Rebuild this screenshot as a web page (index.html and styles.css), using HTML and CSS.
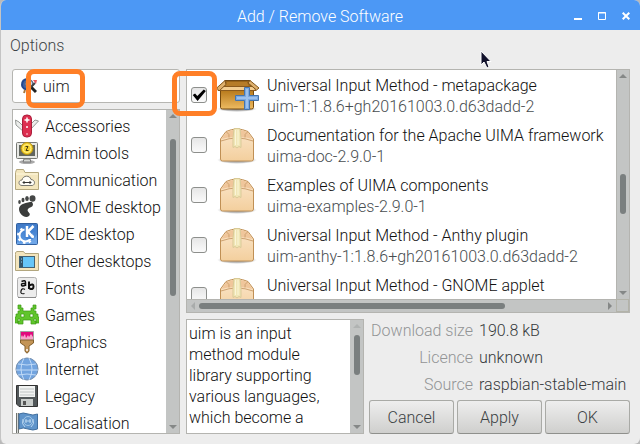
FILE: index.html
```html
<!DOCTYPE html>
<html lang="en">
<head>
<meta charset="utf-8">
<title>Add / Remove Software</title>
<link rel="stylesheet" href="styles.css">
</head>
<body>
<svg class="defs" aria-hidden="true">
  <defs>
    <linearGradient id="boxFill" x1="0" y1="0" x2="0" y2="1"><stop offset="0" stop-color="#fbe6cb"/><stop offset="1" stop-color="#f3cf9d"/></linearGradient>
    <linearGradient id="openFill" x1="0" y1="0" x2="0" y2="1"><stop offset="0" stop-color="#b87a1c"/><stop offset="1" stop-color="#eebb62"/></linearGradient>
    <linearGradient id="kdeFill" x1="0" y1="0" x2="0" y2="1"><stop offset="0" stop-color="#3f78c4"/><stop offset="1" stop-color="#5a9ae6"/></linearGradient>
    <radialGradient id="shade"><stop offset="0" stop-color="#777"/><stop offset=".7" stop-color="#aaa" stop-opacity=".7"/><stop offset="1" stop-color="#ccc" stop-opacity="0"/></radialGradient>
    <symbol id="pkg" viewBox="0 0 42 40">
      <ellipse cx="21" cy="34" rx="20" ry="4" fill="url(#shade)"/>
      <path d="M4.500 13 10 5.500Q21 .500 32 5.500L37.500 13V33Q37.500 35 35.500 35H6.500Q4.500 35 4.500 33Z" fill="url(#boxFill)" stroke="#c09055"/>
      <path d="M5.500 13 10.500 6Q21 1.500 31.500 6L36.500 13Q31 11 21 11T5.500 13Z" fill="#f0c69b"/>
      <path d="M5 15Q13 12 21 12T37 15M10.500 6Q14 8 13 11.500M31.500 6Q28 8 29 11.500" fill="none" stroke="#cda271"/>
      <path d="M18 2.500H24L25 12V21.500L23 20.500 21 22 19 20.500 17 21.500V12Z" fill="#f0e6b6" stroke="#d9c997"/>
      <path d="M19.500 4V19M22 4V19" stroke="#faf5d8"/>
    </symbol>
    <symbol id="pkg-open" viewBox="0 0 44 40">
      <ellipse cx="21" cy="33" rx="20" ry="3" fill="url(#shade)"/>
      <path d="M9 4.500H34L36 14H6Z" fill="#9a6519" stroke="#6f4814"/>
      <path d="M11 6H31L34 13H8Z" fill="#b67c28"/>
      <path d="M4.500 14.500H37.500V31.500Q37.500 33 35.500 33H6.500Q4.500 33 4.500 31.500Z" fill="url(#openFill)" stroke="#764a0e"/>
      <path d="M5 10.500H37L40 14.500H2Z" fill="#f3cd90" stroke="#8b5a1c"/>
      <path d="M9 4.500 .700 12 3 15 10 8.500ZM34 4.500 43 12 40.500 14 32 7Z" fill="#deb06c" stroke="#815419"/>
      <path d="M28.500 11.500H33.500V19.500H42.500V24.500H33.500V33.500H28.500V24.500H19.500V19.500H28.500Z" fill="#7ba9e0" stroke="#4474ae"/>
      <path d="M31 13V32M21 22H41" stroke="#9cc1ee" stroke-width="2"/>
    </symbol>
  </defs>
</svg>

<div class="window">
  <header class="titlebar">
    <h1>Add / Remove Software</h1>
    <div class="controls">
      <button aria-label="Minimise"><svg viewBox="0 0 8 8"><path d="M0 7H8" stroke="#fff" stroke-width="2"/></svg></button>
      <button aria-label="Maximise"><svg viewBox="0 0 8 8"><path d="M.500 .500H7.500V7.500H.500ZM0 1H8" fill="none" stroke="#fff"/></svg></button>
      <button aria-label="Close"><svg viewBox="0 0 8 8"><path d="M.700 .700 7.300 7.300M7.300 .700 .700 7.300" stroke="#fff" stroke-width="2"/></svg></button>
    </div>
  </header>
  <nav class="menubar"><button>Options</button></nav>

  <main class="content">
    <section class="side">
      <div class="search">
        <svg viewBox="0 0 16 16" aria-hidden="true"><path d="M7 1C2 1 1 4 1 7S4 12 7 11" fill="#3c63ad" stroke="#24478c" stroke-width="2"/><circle cx="8" cy="6" r="4" fill="#c9d8ea" stroke="#5a6680" stroke-width="1.500"/><path d="M10 9 15 14" stroke="#222" stroke-width="3"/><path d="M14 5 7 12" stroke="#444" stroke-width="2"/><path d="M12 2 16 2 15 6Z" fill="#ee555b"/><path d="M4 12 3 15M7 12 6 14" stroke="#a8773a" stroke-width="2"/></svg>
        <input type="text" value="uim" aria-label="Search packages">
        <span class="mark mark-search"></span>
      </div>
      <div class="frame list-frame">
        <ul class="categories">
          <li><button><svg viewBox="0 0 24 24"><path d="M.500 6 4 8 11 15 9 18 1 11ZM23.500 7 15 16 14 12 20 6Z" fill="#eceeec" stroke="#969996"/><rect x="7.500" y="1" width="9" height="22" rx="4" fill="#dd2f50" stroke="#aa1f3c"/><path d="M12 3.500V8.500M9.500 6H14.500" stroke="#fff" stroke-width="1.500"/><circle cx="12" cy="13" r="1" fill="#fff"/><circle cx="12" cy="20" r="1" fill="#f3a0af"/></svg>Accessories</button></li>
          <li><button><svg viewBox="0 0 24 24"><ellipse cx="12" cy="21" rx="8" ry="2" fill="#aaa"/><rect x="1.500" y="1.500" width="21" height="16" rx="1" fill="#e7e8e4" stroke="#777974"/><path d="M4 4H20V15H4Z" fill="#62665f"/><path d="M9 18H15L16 21H8Z" fill="#d7d9d5" stroke="#777"/><circle cx="12" cy="7.500" r="6" fill="#f5d22f" stroke="#b28e13"/><circle cx="12" cy="7.500" r="4" fill="none" stroke="#fff087"/><path d="M10.500 5.500H13L11 9.500H13.500" fill="none" stroke="#443b13"/></svg>Admin tools</button></li>
          <li><button><svg viewBox="0 0 24 24"><path d="M.500 4.500 1.500 1.500H8.500L10 4.500H23.500V21.500H.500Z" fill="#f3e6be" stroke="#b4a77d"/><path d="M1 6H23" stroke="#fff8dd"/><path d="M7 17.500C3 17.500 3 12 7 12 8 7 15 7 16 11.500 21 12 20 17.500 17 17.500Z" fill="#fffdf7" stroke="#77766f"/><path d="M8 14.500H16M9.500 13 8 14.500 9.500 16M14.500 13 16 14.500 14.500 16" fill="none" stroke="#333"/></svg>Communication</button></li>
          <li><button><svg viewBox="0 0 24 24"><path d="M17 7C12 7 4 9 4 14 4 19 10 24 14 21 17 18 11 17 13 14 14 12 18 13 18 9Z" fill="#3b3d3c"/><ellipse cx="17.500" cy="3.500" rx="3" ry="3.300" fill="#454746"/><ellipse cx="12" cy="3.500" rx="1.800" ry="2.500" fill="#454746"/><ellipse cx="8" cy="5" rx="1.500" ry="2.200" fill="#454746"/><ellipse cx="4.500" cy="7" rx="1.300" ry="1.900" fill="#454746"/></svg>GNOME desktop</button></li>
          <li><button><svg viewBox="0 0 24 24"><rect x="1.500" y="1.500" width="21" height="21" rx="1" fill="url(#kdeFill)" stroke="#3261a1"/><path d="M2 20C9 22 20 19 22 12V22H2Z" fill="#85b5ed" opacity=".5"/><circle cx="10.500" cy="13.500" r="6" fill="none" stroke="#fff" stroke-width="2"/><circle cx="10.500" cy="13.500" r="7.500" fill="none" stroke="#fff" stroke-width="2" stroke-dasharray="2.500 3.400"/><path d="M9.500 3H20V9L16 13 18 17 12 17 9.500 15Z" fill="#4382d2"/><path d="M12 4V15M18.500 4 13 9.500 18 15.500" fill="none" stroke="#fff" stroke-width="2.500"/></svg>KDE desktop</button></li>
          <li><button><svg viewBox="0 0 24 24"><path d="M.500 5.500V3.500L2 2.500H8.500L10 4.500H23.500V21.500H.500Z" fill="#f3e5bd" stroke="#b2a67e"/><rect x="4.500" y="7.500" width="15" height="11" fill="#66c6f8" stroke="#426173"/><path d="M5 8H8V18H5Z" fill="#345569"/><path d="M6 10H7M6 13H7" stroke="#8bdcff"/></svg>Other desktops</button></li>
          <li><button><svg viewBox="0 0 24 24" aria-hidden="true"><rect x="2.500" y="1.500" width="19" height="20" rx="2" fill="#ececec" stroke="#b0b0b0"/><path d="M3 21.500H21" stroke="#888"/><g fill="none" stroke="#111" stroke-width="1.500"><path d="M6.500 5.500Q10.500 3.500 10.500 6.500V10M10.500 7.500Q6 7 6.500 9T10.500 9"/><path d="M10 13.500Q7 11.500 6 15T9.500 17.500" stroke-width="1.200"/><path d="M14 5.500V13M14.500 9.500Q18.500 7 18.500 10.500T14.500 12.500" stroke-width="2"/></g></svg>Fonts</button></li>
          <li><button><svg viewBox="0 0 24 24"><path d="M3 2H6V5H8V8H16V5H18V2H21V6H19V8H21V11H23V14H24V20H21V16H19V18H21V21H16V17H8V21H3V18H5V16H3V20H0V14H1V11H3V8H5V6H3ZM6 11V14H9V11ZM15 11V14H18V11Z" fill="#60c52c" fill-rule="evenodd" stroke="#3e9816" stroke-width=".700"/></svg>Games</button></li>
          <li><button><svg viewBox="0 0 24 24"><path d="M5.500 1.500H18.500V10H5.500Z" fill="#e2087d" stroke="#a3a3a0"/><path d="M6 7 7 5 8 7 10 4 11 8 13 5 14 7 16 4 18 7V10H6Z" fill="#f7a5cb"/><path d="M5.500 10H18.500V13L14 16V21Q12 25 10 21V16L5.500 13Z" fill="#c39456" stroke="#82602e"/><circle cx="12" cy="20" r="1" fill="#fff"/></svg>Graphics</button></li>
          <li><button><svg viewBox="0 0 24 24"><circle cx="12" cy="12" r="11" fill="#72a4df" stroke="#7790ad"/><path d="M3 7Q12 9 21 7M1 13H23M3 18Q12 16 21 18M9 1Q3 12 9 23M14 1Q20 12 14 23" fill="none" stroke="#c0daf7"/></svg>Internet</button></li>
          <li><button><svg viewBox="0 0 24 24"><path d="M1.500 1.500H22.500V22.500H4L1.500 20Z" fill="#52585a" stroke="#333"/><path d="M4 2H20V13H4Z" fill="#f1f3f2"/><path d="M5 5H19M5 8H19M5 11H19" stroke="#bfc4c4"/><path d="M6 15H18V22H6Z" fill="#c9cdcb"/><path d="M8 17H11V21H8Z" fill="#555"/></svg>Legacy</button></li>
          <li><button><svg viewBox="0 0 24 24"><path d="M2.500 2V24" stroke="#70736f" stroke-width="3"/><path d="M2.500 2V24" stroke="#d6d8d5"/><path d="M4 3Q8 1 13 3T22.500 3V18Q18 20 13 18T4 18Z" fill="#5f94ca" stroke="#416f9e"/><circle cx="13" cy="10" r="4.500" fill="none" stroke="#a3c8e8"/><path d="M8 8Q6 13 10 16M18 8Q20 13 16 16M11 8V12M15 8V12M10 10H16" fill="none" stroke="#bad7f0"/></svg>Localisation</button></li>
        </ul>
        <div class="bar bar-v" aria-hidden="true"><i class="arrow up"></i><span class="track"><b class="thumb cat-thumb"></b></span><i class="arrow down"></i></div>
      </div>
    </section>

    <section class="main">
      <div class="frame packages-frame">
        <ul class="packages">
          <li><span class="tick"><input type="checkbox" id="p1" checked><span class="mark mark-tick"></span></span><svg viewBox="0 0 44 40"><use href="#pkg-open"/></svg><label for="p1">Universal Input Method - metapackage<small>uim-1:1.8.6+gh20161003.0.d63dadd-2</small></label></li>
          <li><span class="tick"><input type="checkbox" id="p2"></span><svg viewBox="0 0 42 40"><use href="#pkg"/></svg><label for="p2">Documentation for the Apache UIMA framework<small>uima-doc-2.9.0-1</small></label></li>
          <li><span class="tick"><input type="checkbox" id="p3"></span><svg viewBox="0 0 42 40"><use href="#pkg"/></svg><label for="p3">Examples of UIMA components<small>uima-examples-2.9.0-1</small></label></li>
          <li><span class="tick"><input type="checkbox" id="p4"></span><svg viewBox="0 0 42 40"><use href="#pkg"/></svg><label for="p4">Universal Input Method - Anthy plugin<small>uim-anthy-1:1.8.6+gh20161003.0.d63dadd-2</small></label></li>
          <li><span class="tick"><input type="checkbox" id="p5"></span><svg viewBox="0 0 42 40"><use href="#pkg"/></svg><label for="p5">Universal Input Method - GNOME applet</label></li>
        </ul>
        <div class="bar bar-v" aria-hidden="true"><i class="arrow up"></i><span class="track"><b class="thumb pkg-thumb"></b></span><i class="arrow down"></i></div>
        <div class="bar bar-h" aria-hidden="true"><i class="arrow left"></i><span class="track"><b class="thumb wide-thumb"></b></span><i class="arrow right"></i></div>
        <div class="corner"></div>
      </div>
      <div class="bottom">
        <div class="frame description">
          <p>uim is an input method module library supporting various languages, which become a</p>
          <div class="bar bar-v" aria-hidden="true"><i class="arrow up faint"></i><span class="track"><b class="thumb desc-thumb"></b></span><i class="arrow down"></i></div>
        </div>
        <div class="details">
          <dl>
            <dt>Download size</dt><dd>190.8 kB</dd>
            <dt>Licence</dt><dd>unknown</dd>
            <dt>Source</dt><dd>raspbian-stable-main</dd>
          </dl>
          <div class="actions"><button>Cancel</button><button>Apply</button><button>OK</button></div>
        </div>
      </div>
    </section>
  </main>
  <svg class="pointer" viewBox="0 0 12 19" aria-hidden="true"><path d="M1 1V15L4 12 7 18 9 17 7 11.500H11Z" fill="#12122c" stroke="#fff"/></svg>
</div>
</body>
</html>
```
FILE: styles.css
```css
* { box-sizing: border-box; }

body {
  margin: 0;
  background: #b9b9b9;
  color: #111;
  font: 300 16px/21px Roboto, "Liberation Sans", sans-serif;
}

button, input {
  margin: 0;
  padding: 0;
  border: 0;
  background: none;
  color: inherit;
  font: inherit;
}

ul, dl, dd, p, h1 { margin: 0; padding: 0; }
ul { list-style: none; }
svg { display: block; flex: none; }
.defs { position: absolute; width: 0; height: 0; }

.window {
  position: relative;
  display: flex;
  flex-direction: column;
  height: 100vh;
  border-left: 1px solid #c4c4c4;
  border-radius: 6px;
  background: #ededed;
  overflow: hidden;
}

.titlebar {
  position: relative;
  display: flex;
  align-items: center;
  justify-content: center;
  flex: none;
  height: 30px;
  margin-left: -1px;
  background: #4c98f5;
  color: #fff;
}
.titlebar h1 { font-size: 16px; font-weight: 300; padding-top: 2px; }
.controls { position: absolute; right: 10px; top: 12px; display: flex; gap: 16px; }
.controls button, .controls svg { width: 8px; height: 8px; }

.menubar { flex: none; height: 39px; padding: 5px 9px; color: #3d4446; }

.content {
  display: grid;
  grid-template-columns: 168px minmax(0, 1fr);
  gap: 6px;
  flex: 1;
  min-height: 0;
  padding: 0 10px 10px 11px;
}
.side, .main { display: flex; flex-direction: column; gap: 6px; min-width: 0; min-height: 0; }

.search {
  position: relative;
  display: flex;
  align-items: center;
  flex: none;
  gap: 6px;
  height: 34px;
  padding: 0 8px;
  border: 1px solid #b6b6b2;
  border-radius: 3px;
  background: #fff;
}
.search svg { width: 16px; height: 16px; }
.search input { flex: 1; min-width: 0; color: #222; outline: 0; }

.mark {
  position: absolute;
  border: 5px solid #ff7f27;
  border-radius: 8px;
  pointer-events: none;
  z-index: 2;
}
.mark-search { left: 13px; top: -1px; width: 59px; height: 39px; }
.mark-tick { left: -19px; top: -16px; width: 45px; height: 45px; }

.frame { border: 1px solid #b4b4b0; background: #fff; }
.list-frame { display: flex; flex: 1; min-height: 0; }

.categories { flex: 1; min-width: 0; padding: 2px 0 0 2px; overflow: hidden; }
.categories button {
  display: flex;
  align-items: center;
  gap: 6px;
  width: 100%;
  height: 27px;
  padding-top: 1px;
  text-align: left;
  white-space: nowrap;
}
.categories svg { width: 24px; height: 24px; }

.bar { display: flex; align-items: center; background: #c3c5c4; }
.bar-v { flex: none; flex-direction: column; width: 13px; padding: 4px 0; }
.bar-h { height: 13px; padding: 0 4px; border-top: 1px solid #b4b4b0; }
.track { position: relative; flex: 1; align-self: stretch; }
.thumb { position: absolute; border-radius: 3px; background: #7a7f7f; }
.bar-v .thumb { left: 4px; width: 6px; }
.bar-h .thumb { top: 3px; height: 6px; }
.cat-thumb { top: 7%; height: 51%; }
.pkg-thumb { top: 45%; height: 19%; }
.desc-thumb { top: 7%; height: 41%; }
.wide-thumb { left: 1%; width: 74%; }

.arrow { flex: none; border: 0 solid transparent; }
.up { border-width: 0 4px 4px; border-bottom-color: #858887; }
.down { border-width: 4px 4px 0; border-top-color: #858887; }
.left { border-width: 4px 4px 4px 0; border-right-color: #a9acab; }
.right { border-width: 4px 0 4px 4px; border-left-color: #858887; }
.faint { border-bottom-color: #b0b3b2; }

.packages-frame {
  display: grid;
  grid-template: minmax(0, 1fr) 13px / minmax(0, 1fr) 13px;
  flex: 1;
  min-height: 0;
}
.packages-frame .bar-v { border-left: 1px solid #b4b4b0; }
.packages-frame .bar-v .thumb { left: 3px; }
.corner { border: 1px solid #b3b3a9; background: #c3c5c4; }

/* Rows clip at the bottom edge; the left margin leaves room for the tick highlight. */
.packages {
  min-height: 0;
  margin-left: -20px;
  padding: 1px 0 0 24px;
  overflow: hidden;
}
.packages li { display: flex; height: 50px; white-space: nowrap; }
.packages svg { width: 44px; height: 40px; margin: 5px 7px 0 9px; }
.packages svg[viewBox="0 0 42 40"] { width: 42px; margin-right: 9px; }
.packages label { padding-top: 4px; }
.packages small { display: block; font-size: 16px; color: #484d50; }
.tick { position: relative; width: 16px; height: 16px; margin-top: 16px; }
.tick input {
  display: block;
  appearance: none;
  width: 16px;
  height: 16px;
  border: 1px solid #8d8f8c;
  border-radius: 3px;
  background: linear-gradient(#e6e6e6, #fafafa);
}
.tick input:checked::after {
  content: "";
  display: block;
  width: 14px;
  height: 14px;
  background: #000;
  clip-path: polygon(5% 50%, 22% 40%, 38% 58%, 84% 10%, 99% 22%, 40% 92%);
}

.bottom { display: grid; grid-template-columns: 178px minmax(0, 1fr); gap: 5px; flex: none; }
.description { display: flex; height: 115px; }
.description p { flex: 1; min-width: 0; padding: 3px 8px 3px 2px; overflow: hidden; }
.details { display: flex; flex-direction: column; justify-content: space-between; }
.details dl {
  display: grid;
  grid-template-columns: 104px 1fr;
  column-gap: 6px;
  margin-top: -2px;
  line-height: 27px;
}
.details dt { text-align: right; color: #929495; white-space: nowrap; }
.details dd { color: #35393b; white-space: nowrap; }
.actions { display: grid; grid-template-columns: repeat(3, 1fr); gap: 3px; }
.actions button {
  height: 34px;
  border: 1px solid #a9aaa6;
  border-bottom-color: #8f908c;
  border-radius: 3px;
  background: linear-gradient(#eeeeee, #cfcfcd);
  color: #3b4143;
}

.pointer { position: absolute; left: 479px; top: 50px; width: 12px; height: 19px; }
```
